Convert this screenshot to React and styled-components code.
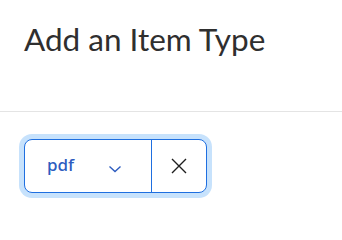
import styled, { createGlobalStyle } from "styled-components";

const GlobalStyle = createGlobalStyle`
  body {
    margin: 0;
    background: #ffffff;
    font-family: Lato, "Open Sans", sans-serif;
  }
`;

const Header = styled.div`
  height: 112px;
  box-sizing: border-box;
  padding: 19px 24px 0;
  border-bottom: 1px solid #e4e4e4;
`;

const Title = styled.h1`
  margin: 0;
  font-family: Lato, "Open Sans", sans-serif;
  font-weight: 400;
  font-size: 31.5px;
  line-height: 40px;
  color: #2f2f2f;
`;

const Body = styled.div`
  padding: 27px 24px;
`;

const SelectGroup = styled.div`
  display: inline-flex;
  height: 54px;
  box-sizing: border-box;
  border: 1px solid #1f6fe0;
  border-radius: 8px;
  box-shadow: 0 0 0 5px #c7e2fc;
  background: #ffffff;
`;

const SelectButton = styled.button`
  display: flex;
  align-items: center;
  width: ${(props) => (props.width ? `${props.width}px` : "auto")};
  justify-content: ${(props) => (props.center ? "center" : "flex-start")};
  padding: ${(props) => (props.center ? "0" : "0 0 0 22px")};
  border: none;
  border-left: ${(props) => (props.divided ? "1px solid #1f6fe0" : "none")};
  background: transparent;
  cursor: pointer;
`;

const Label = styled.span`
  font-family: "Noto Sans", Lato, sans-serif;
  font-weight: 500;
  font-size: 17px;
  color: #2d5cbf;
  width: 61px;
  text-align: left;
  margin-top: -3px;
`;

const ChevronIcon = styled.svg`
  margin-top: 5px;
`;

function Chevron() {
  return (
    <ChevronIcon width="14" height="8" viewBox="0 0 14 8" fill="none">
      <path d="M1.5 1.5 L7 6.5 L12.5 1.5" stroke="#2d5cbf" strokeWidth="1.4" />
    </ChevronIcon>
  );
}

function Cross() {
  return (
    <svg width="16" height="16" viewBox="0 0 16 16" fill="none">
      <path d="M1 1 L15 15 M15 1 L1 15" stroke="#1e1e1e" strokeWidth="1.4" />
    </svg>
  );
}

export default function App() {
  return (
    <>
      <GlobalStyle />
      <Header>
        <Title>Add an Item Type</Title>
      </Header>
      <Body>
        <SelectGroup>
          <SelectButton width={126}>
            <Label>pdf</Label>
            <Chevron />
          </SelectButton>
          <SelectButton width={55} center divided>
            <Cross />
          </SelectButton>
        </SelectGroup>
      </Body>
    </>
  );
}
